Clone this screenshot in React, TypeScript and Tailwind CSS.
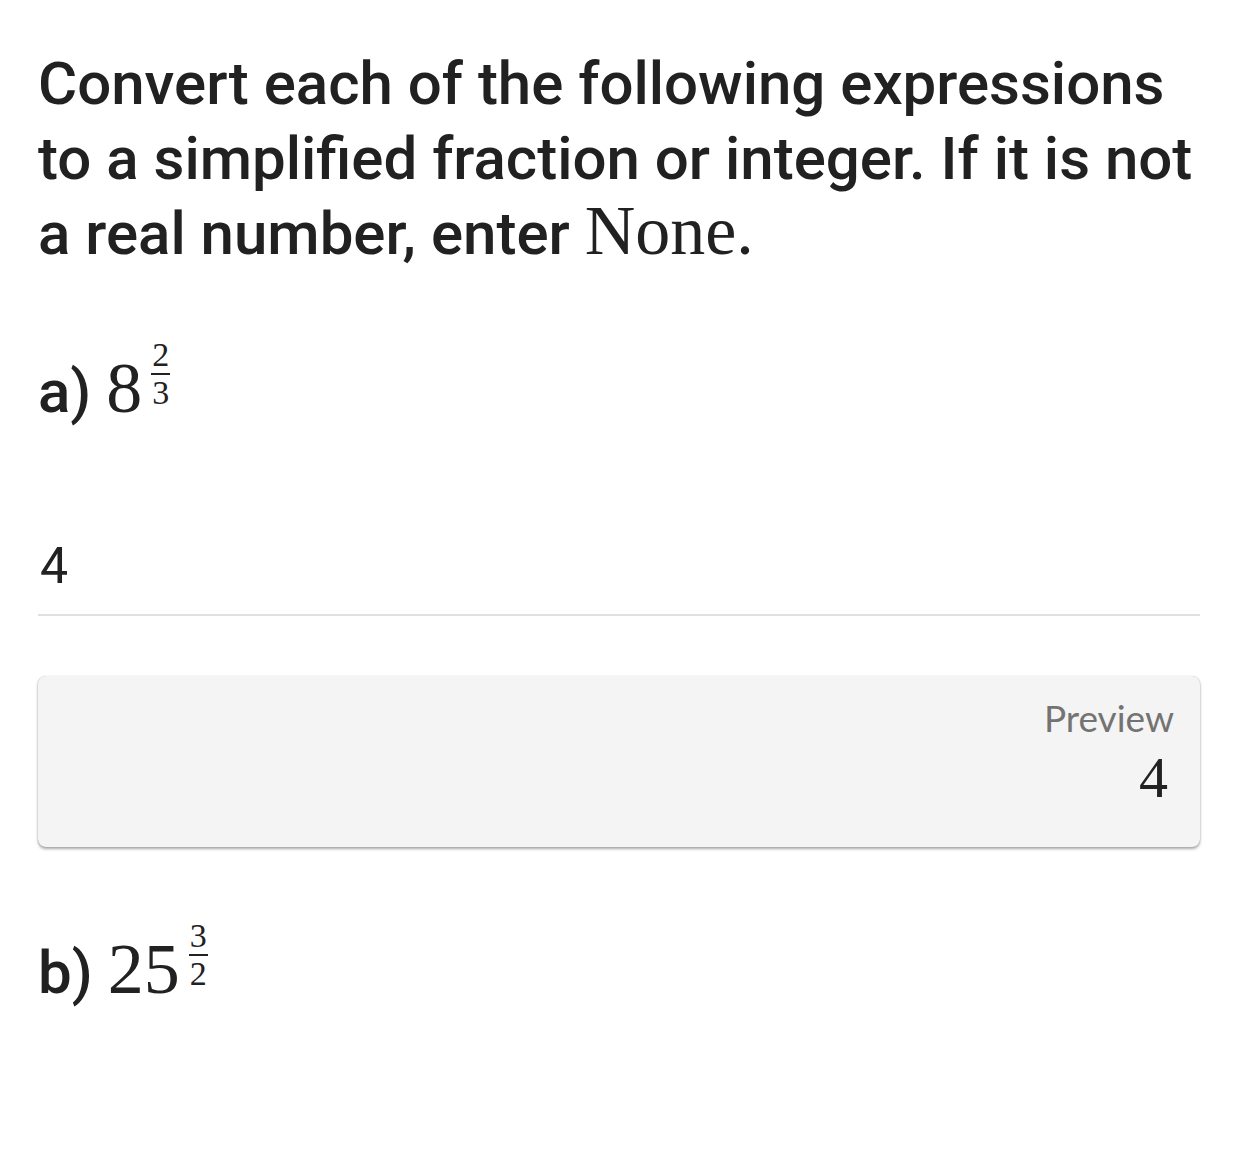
import React from 'react';

const serif = "font-['Liberation_Serif','DejaVu_Serif',serif]";

// small stacked fraction used as an exponent
const Frac = ({ num, den }: { num: string; den: string }) => (
  <span className={`-mt-[16px] ml-[9px] inline-flex flex-col items-center align-[46px] ${serif}`}>
    <span className="text-[34px] leading-[24px]">{num}</span>
    <span className="mt-[6px] h-[2px] w-[19px] bg-[#222]" />
    <span className="mt-[6px] text-[34px] leading-[24px]">{den}</span>
  </span>
);

const Power = ({ label, base, num, den }: { label: string; base: string; num: string; den: string }) => (
  <div className="text-[60px] font-medium leading-[75px] text-[#212121]">
    {label}{' '}
    <span className={`${serif} text-[72px] font-normal leading-none`}>{base}</span>
    <Frac num={num} den={den} />
  </div>
);

const App = () => {
  return (
    <div className="min-h-[1172px] w-[1238px] bg-white px-[38px] pt-[46px] font-['Roboto','Liberation_Sans',sans-serif] text-[#212121]">
      <h1 className="text-[60px] font-medium leading-[75px]">
        Convert each of the following expressions to a simplified fraction or integer. If it is not a
        real number, enter{' '}
        <span className={`${serif} text-[70px] font-normal leading-none`}>None.</span>
      </h1>

      <div className="mt-[81px]">
        <Power label="a)" base="8" num="2" den="3" />
      </div>

      <div className="mt-[108px] border-b-2 border-[#e0e0e0] pb-[19px] pl-[2px] text-[50px] leading-[58px] text-[#222]">
        4
      </div>

      <div className="mt-[60px] flex h-[171px] flex-col items-end rounded-[8px] bg-[#f4f4f4] pr-[26px] pt-[18px] shadow-[0_2px_3px_rgba(0,0,0,0.35),0_0_1px_rgba(0,0,0,0.25)]">
        <span className="font-['Lato','Roboto',sans-serif] text-[37px] leading-[48px] text-[#737373]">
          Preview
        </span>
        <span className={`${serif} mr-[6px] mt-[6px] text-[58px] leading-[60px] text-[#222]`}>4</span>
      </div>

      <div className="mt-[86px]">
        <Power label="b)" base="25" num="3" den="2" />
      </div>
    </div>
  );
};

export default App;
